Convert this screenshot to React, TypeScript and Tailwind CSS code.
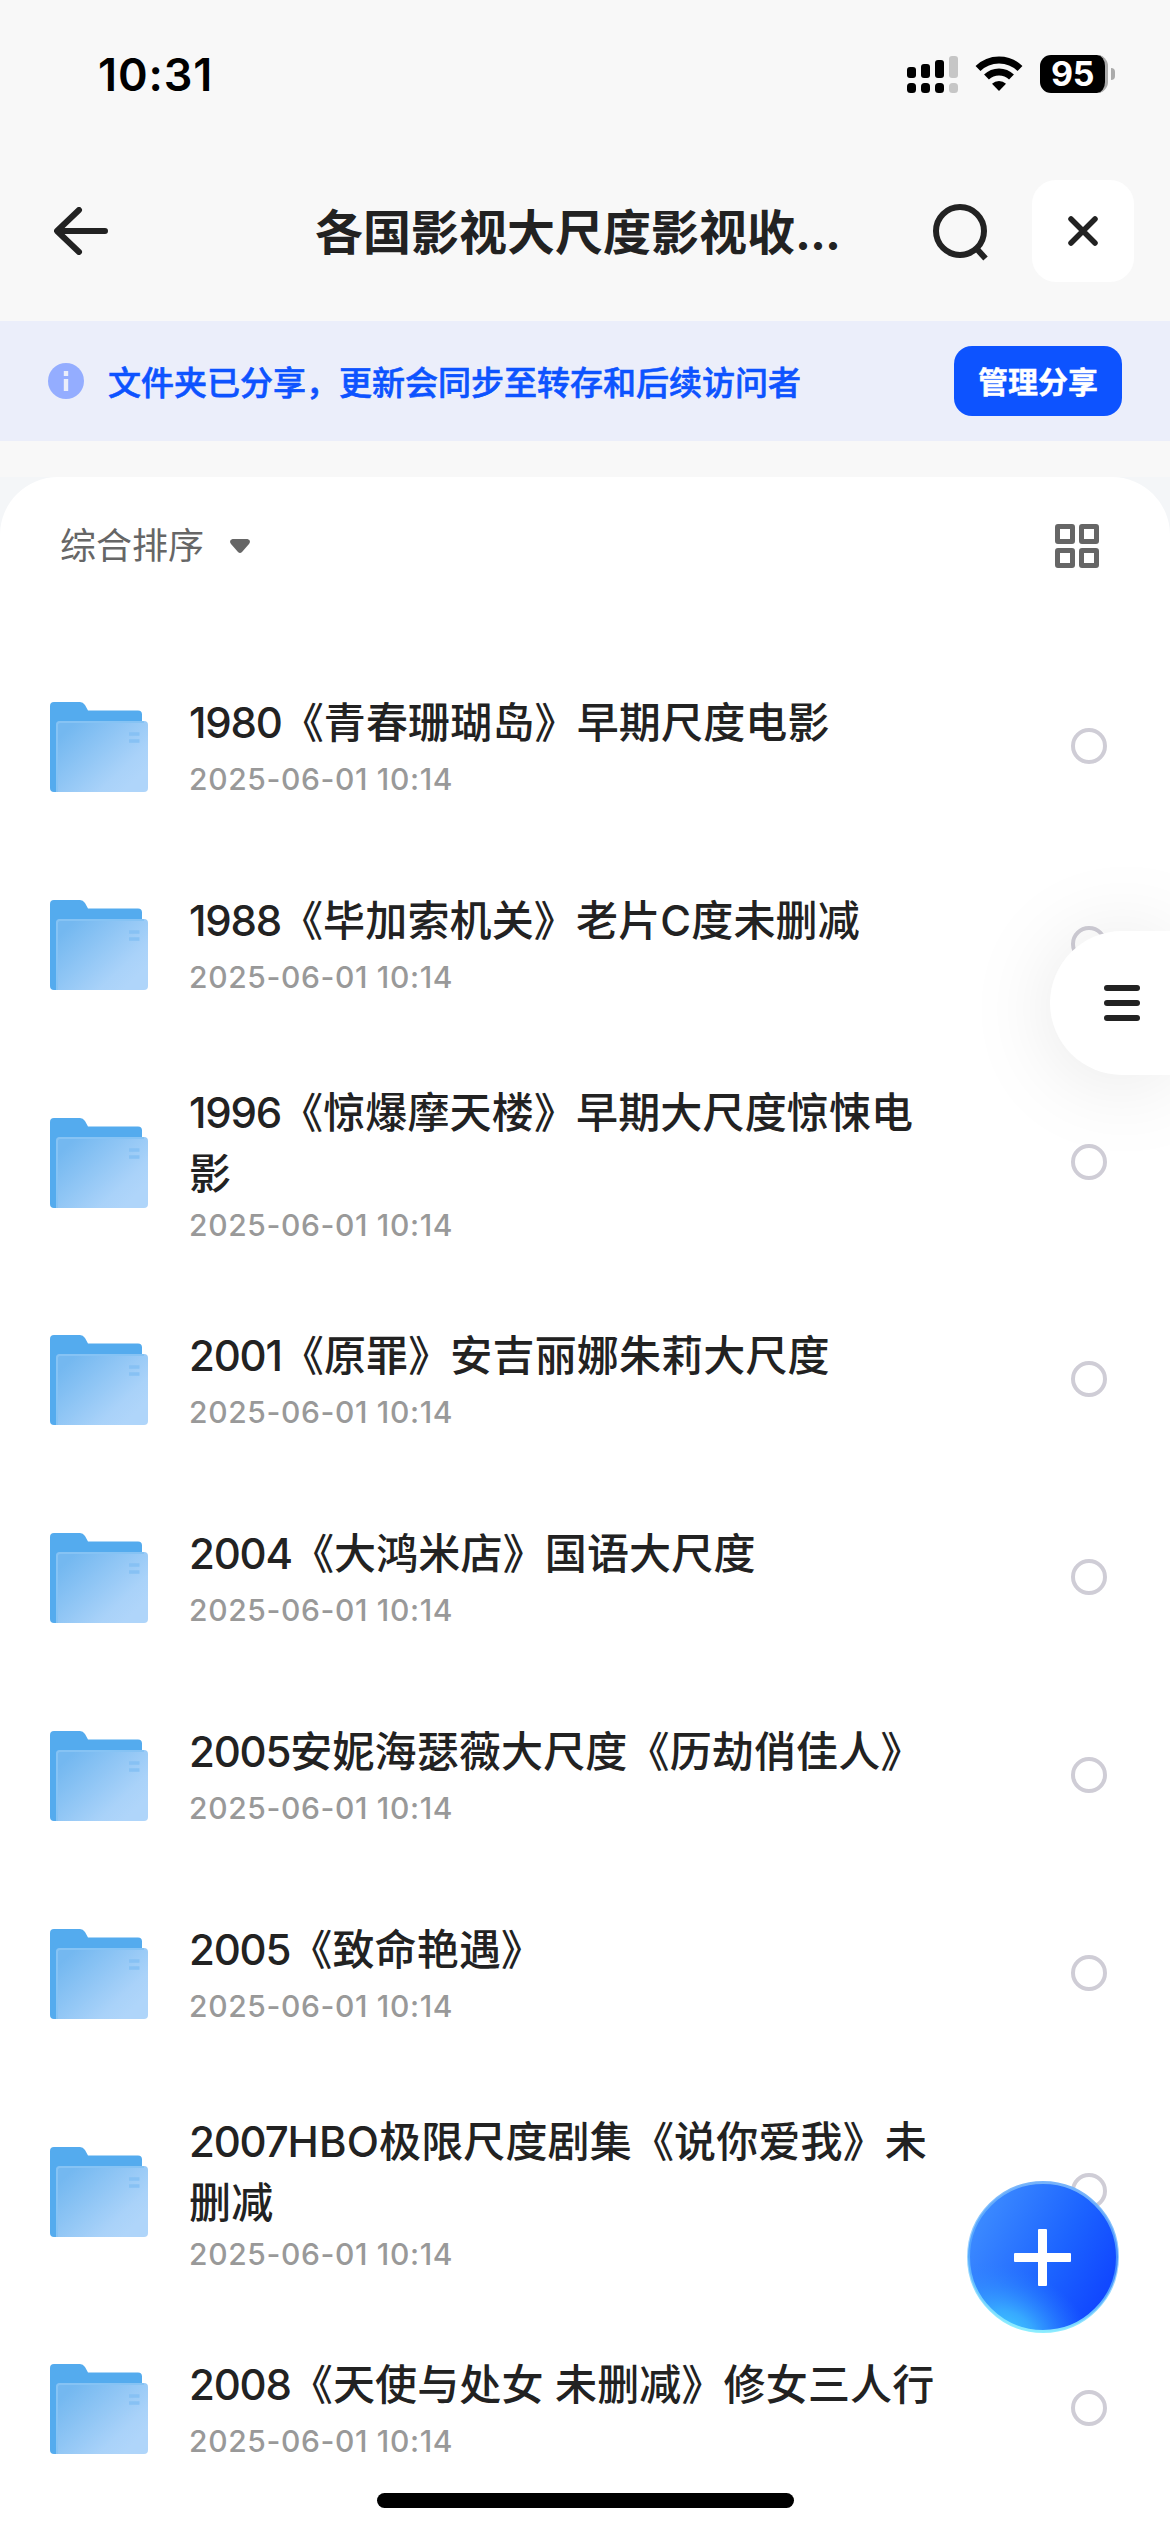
import React from 'react';

interface FolderItem {
  prefix: string;
  name: string;
  date: string;
  tall?: boolean;
}

const folders: FolderItem[] = [
  { prefix: '1980', name: '《青春珊瑚岛》早期尺度电影', date: '2025-06-01 10:14' },
  { prefix: '1988', name: '《毕加索机关》老片C度未删减', date: '2025-06-01 10:14' },
  { prefix: '1996', name: '《惊爆摩天楼》早期大尺度惊悚电影', date: '2025-06-01 10:14', tall: true },
  { prefix: '2001', name: '《原罪》安吉丽娜朱莉大尺度', date: '2025-06-01 10:14' },
  { prefix: '2004', name: '《大鸿米店》国语大尺度', date: '2025-06-01 10:14' },
  { prefix: '2005', name: '安妮海瑟薇大尺度《历劫俏佳人》', date: '2025-06-01 10:14' },
  { prefix: '2005', name: '《致命艳遇》', date: '2025-06-01 10:14' },
  { prefix: '2007', name: 'HBO极限尺度剧集《说你爱我》未删减', date: '2025-06-01 10:14', tall: true },
  { prefix: '2008', name: '《天使与处女 未删减》修女三人行', date: '2025-06-01 10:14' },
];

const FolderIcon = () => (
  <svg className="mt-[2px] h-[90px] w-[98px] shrink-0" viewBox="0 0 98 90" fill="none">
    <defs>
      <linearGradient id="folderFront" x1="20" y1="25" x2="78" y2="85" gradientUnits="userSpaceOnUse">
        <stop offset="0" stopColor="#74B8F0" />
        <stop offset="0.8" stopColor="#A9D2F9" />
        <stop offset="1" stopColor="#AFD5FA" />
      </linearGradient>
    </defs>
    <path d="M0 4a4 4 0 0 1 4-4h26q3 0 5 3l3 5.500h50a4 4 0 0 1 4 4V60L10 90H4a4 4 0 0 1-4-4Z" fill="#54ABEE" />
    <path d="M6 23a4 4 0 0 1 4-4h84a4 4 0 0 1 4 4v63a4 4 0 0 1-4 4H6Z" fill="url(#folderFront)" />
    <path d="M7 90V23a3 3 0 0 1 3-3h84" stroke="#86C3F4" strokeWidth="2" />
    <path d="M79 32h10.500M79 39h10.500" stroke="#87C1F4" strokeWidth="3.500" />
  </svg>
);

const StatusBar = () => (
  <div className="flex h-[150px] items-start pr-[55px] pl-[98px]">
    <div className="mt-[46px] flex-1 text-[45px] leading-[58px] font-semibold tracking-[0.9px] text-black">10:31</div>
    <div className="mt-[55px] flex h-[38px]">
      <svg className="h-[38px] w-[51px]" viewBox="0 0 51 38">
        <rect x="0" y="12" width="9" height="11" rx="3" />
        <rect x="14" y="9" width="9" height="14" rx="3" />
        <rect x="28" y="5" width="9" height="18" rx="3" />
        <rect x="42" y="1" width="9" height="22" rx="3" fill="#C6C6C6" />
        <rect x="0" y="28" width="9" height="10" rx="3.500" />
        <rect x="14" y="28" width="9" height="10" rx="3.500" />
        <rect x="28" y="28" width="9" height="10" rx="3.500" />
        <rect x="42" y="28" width="9" height="10" rx="3.500" fill="#C6C6C6" />
      </svg>
      <svg className="ml-[17px] h-[36px] w-[48px]" viewBox="0 0 48 36">
        <path d="M3 13.500a30 30 0 0 1 42 0" fill="none" stroke="#000" strokeWidth="7" />
        <path d="M11.500 22a18 18 0 0 1 25 0" fill="none" stroke="#000" strokeWidth="7" />
        <path d="M24 36 17 28.800a10 10 0 0 1 14 0Z" />
      </svg>
      <div className="ml-[17px] flex h-[38px] w-[68px] items-center justify-center rounded-[11px] border-r-[3px] border-[#ababab] bg-black text-[34px] leading-[38px] font-bold tracking-[-0.5px] text-white">
        95
      </div>
      <div className="mt-[13px] ml-[3px] h-[12px] w-[4px] rounded-r-full bg-[#ababab]" />
    </div>
  </div>
);

const Header = () => (
  <div className="flex h-[171px] items-start pr-9 pl-[54px]">
    <svg className="mt-[57px] h-[48px] w-[54px]" viewBox="0 0 54 48" fill="none" stroke="#222" strokeWidth="6" strokeLinecap="round" strokeLinejoin="round">
      <path d="M51 24H4M25 3 3 24l22 21" />
    </svg>
    <h1 className="mt-[48px] ml-[207px] w-[570px] text-[48px] leading-[70px] font-bold whitespace-nowrap">
      各国影视大尺度影视收<span className="tracking-[-1px]">...</span>
    </h1>
    <svg className="mt-[53px] ml-[46px] h-[58px] w-[58px] shrink-0" viewBox="0 0 58 58" fill="none" stroke="#222" strokeWidth="6">
      <circle cx="29" cy="28" r="24" />
      <path d="m45 45 9.500 10.500" />
    </svg>
    <button className="mt-[30px] ml-auto flex h-[102px] w-[102px] shrink-0 items-center justify-center rounded-3xl bg-white">
      <svg className="h-[30px] w-[30px]" viewBox="0 0 30 30" stroke="#222" strokeWidth="5.500" strokeLinecap="round">
        <path d="m3 3 24 24M27 3 3 27" />
      </svg>
    </button>
  </div>
);

const ShareBanner = () => (
  <div className="flex h-[120px] items-center bg-[#ebeefa] px-12">
    <svg className="h-9 w-9 shrink-0" viewBox="0 0 36 36">
      <circle cx="18" cy="18" r="18" fill="#94adff" />
      <path d="M15.800 8h4.400v5h-4.400zM15.800 16h4.400v12h-4.400z" fill="#ebeefa" />
    </svg>
    <p className="ml-6 flex-1 pt-[4px] text-[33px] leading-[48px] font-medium whitespace-nowrap text-[#0d53ff] [-webkit-text-stroke:0.6px_#0d53ff]">
      文件夹已分享，更新会同步至转存和后续访问者
    </p>
    <button className="h-[70px] w-[168px] rounded-[18px] bg-[#0d53ff] pt-[2px] text-[30px] font-bold text-white [-webkit-text-stroke:0.4px_#fff]">
      管理分享
    </button>
  </div>
);

const FolderRow: React.FC<FolderItem> = ({ prefix, name, date, tall }) => (
  <li className={`flex items-center pr-[63px] pl-[50px] ${tall ? 'h-[237px]' : 'h-[198px]'}`}>
    <FolderIcon />
    <div className={`ml-[41px] w-[760px] ${tall ? 'pt-[5px]' : '-mt-[2px]'}`}>
      <div className={`text-[42px] font-medium tracking-[0.15px] ${tall ? 'leading-[61px]' : 'leading-[67px]'}`}>
        <span className="font-[450] tracking-[-1.2px]">{prefix}</span>
        {name}
      </div>
      <div className={`text-[30px] font-medium tracking-[0.65px] text-[#999] ${tall ? 'leading-[43px]' : 'leading-[46px]'}`}>{date}</div>
    </div>
    <span className="ml-auto h-9 w-9 rounded-full border-[4px] border-[#cfcdd6]" />
  </li>
);

export default function App() {
  return (
    <div className="relative h-[2532px] w-[1170px] overflow-hidden bg-[#f8f8f8] font-['Inter','Noto_Sans_CJK_SC',sans-serif] text-[#222]">
      <StatusBar />
      <Header />
      <ShareBanner />
      <div className="h-9" />

      <div className="bg-[#f4f6f8]">
        <main className="rounded-t-[58px] bg-white">
          <div className="flex h-[170px] items-start justify-between pr-[71px] pl-[60px]">
            <button className="mt-[42px] flex items-center text-[36px] leading-[54px] text-[#666]">
              综合排序
              <svg className="ml-[26px] h-[14px] w-[20px]" viewBox="0 0 20 14" fill="#666">
                <path d="M2.500 0h15q4 1.500 1.500 5l-7 8q-2 2-4 0L1 5Q-1.500 1.500 2.500 0Z" />
              </svg>
            </button>
            <svg className="mt-[47px] h-[44px] w-[44px]" viewBox="0 0 44 44" fill="none" stroke="#666" strokeWidth="5">
              <rect x="2.500" y="2.500" width="15" height="15" rx="0.500" />
              <rect x="26.500" y="2.500" width="15" height="15" rx="0.500" />
              <rect x="2.500" y="26.500" width="15" height="15" rx="0.500" />
              <rect x="26.500" y="26.500" width="15" height="15" rx="0.500" />
            </svg>
          </div>
          <ul>
            {folders.map((item) => (
              <FolderRow key={item.prefix + item.name} {...item} />
            ))}
          </ul>
          <div className="h-10" />
        </main>
      </div>

      {/* Side menu handle */}
      <button className="absolute top-[931px] right-0 flex h-36 w-[120px] flex-col justify-center gap-[9px] rounded-l-full bg-white pl-[54px] shadow-[0_6px_90px_rgba(0,0,0,0.1)]">
        <span className="h-[6px] w-9 rounded-full bg-[#222]" />
        <span className="h-[6px] w-9 rounded-full bg-[#222]" />
        <span className="h-[6px] w-9 rounded-full bg-[#222]" />
      </button>

      {/* Add button */}
      <button className="absolute top-[2181px] left-[967px] h-[152px] w-[152px]">
        <svg className="h-full w-full" viewBox="0 0 152 152">
          <defs>
            <linearGradient id="fab" x1="15" y1="40" x2="140" y2="105" gradientUnits="userSpaceOnUse">
              <stop offset="0" stopColor="#3A88FF" />
              <stop offset="0.6" stopColor="#1C63FF" />
              <stop offset="1" stopColor="#1148FF" />
            </linearGradient>
            <radialGradient id="fabGlow" cx="0" cy="0" r="1" gradientUnits="userSpaceOnUse" gradientTransform="translate(42 150) rotate(27) scale(92 62)">
              <stop offset="0" stopColor="#40C8FF" />
              <stop offset="0.3" stopColor="#3BB4FF" stopOpacity="0.85" />
              <stop offset="1" stopColor="#2C80FF" stopOpacity="0" />
            </radialGradient>
            <linearGradient id="fabRim" x1="85" y1="0" x2="60" y2="152" gradientUnits="userSpaceOnUse">
              <stop offset="0" stopColor="#77B3FA" />
              <stop offset="0.5" stopColor="#5FB5FF" stopOpacity="0.6" />
              <stop offset="1" stopColor="#8FF0FF" />
            </linearGradient>
          </defs>
          <circle cx="76" cy="76" r="75" fill="url(#fab)" />
          <circle cx="76" cy="76" r="75" fill="url(#fabGlow)" />
          <circle cx="76" cy="76" r="74.500" fill="none" stroke="url(#fabRim)" strokeWidth="3" />
          <rect x="47" y="72" width="57" height="9" rx="1" fill="#fff" />
          <rect x="71" y="48" width="9" height="57" rx="1" fill="#fff" />
        </svg>
      </button>

      {/* Home indicator */}
      <div className="absolute bottom-6 left-[377px] h-[15px] w-[417px] rounded-full bg-black" />
    </div>
  );
}
